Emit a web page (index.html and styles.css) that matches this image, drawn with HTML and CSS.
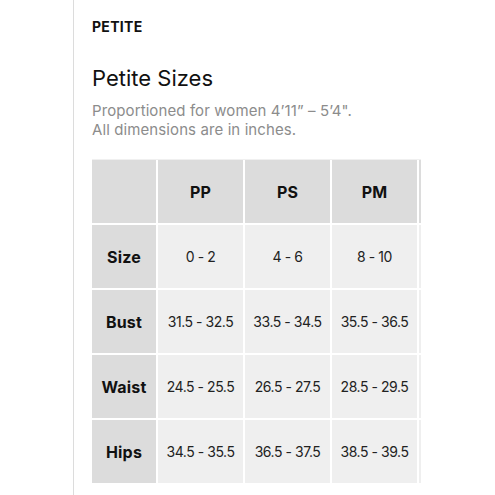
FILE: index.html
```html
<!DOCTYPE html>
<html>
<head>
<meta charset="utf-8">
<link rel="stylesheet" href="styles.css">
</head>
<body>
<div class="page">
  <div class="panel">
    <div class="eyebrow">PETITE</div>
    <h1 class="title">Petite Sizes</h1>
    <p class="desc">Proportioned for women 4’11” – 5’4".<br>All dimensions are in inches.</p>
    <div class="scroller">
      <div class="chart">
        <div class="cell head"></div>
        <div class="cell head">PP</div>
        <div class="cell head">PS</div>
        <div class="cell head">PM</div>
        <div class="cell head"></div>

        <div class="cell head">Size</div>
        <div class="cell">0 - 2</div>
        <div class="cell">4 - 6</div>
        <div class="cell">8 - 10</div>
        <div class="cell"></div>

        <div class="cell head">Bust</div>
        <div class="cell">31.5 - 32.5</div>
        <div class="cell">33.5 - 34.5</div>
        <div class="cell">35.5 - 36.5</div>
        <div class="cell"></div>

        <div class="cell head">Waist</div>
        <div class="cell">24.5 - 25.5</div>
        <div class="cell">26.5 - 27.5</div>
        <div class="cell">28.5 - 29.5</div>
        <div class="cell"></div>

        <div class="cell head">Hips</div>
        <div class="cell">34.5 - 35.5</div>
        <div class="cell">36.5 - 37.5</div>
        <div class="cell">38.5 - 39.5</div>
        <div class="cell"></div>
      </div>
    </div>
  </div>
</div>
</body>
</html>
```
FILE: styles.css
```css
html, body {
  margin: 0;
  padding: 0;
  background: #ffffff;
}
body {
  font-family: Inter, "Open Sans", sans-serif;
  color: #111;
  width: 495px;
  height: 495px;
  overflow: hidden;
}
.page {
  padding-left: 73px;
  height: 495px;
}
.panel {
  border-left: 1px solid #dcdcdc;
  height: 495px;
  padding: 18px 0 0 18px;
  box-sizing: border-box;
}
.eyebrow {
  font-size: 14px;
  font-weight: 700;
  line-height: 17px;
  letter-spacing: 0.3px;
}
.title {
  margin: 30px 0 0 0;
  font-size: 22px;
  font-weight: 400;
  line-height: 26px;
  letter-spacing: 0;
}
.desc {
  margin: 10px 0 0 0;
  font-size: 15px;
  line-height: 19px;
  color: #8c8c8c;
  letter-spacing: 0.1px;
}
.scroller {
  margin-top: 20px;
  width: 329px;
  overflow: hidden;
  border-top: 1px solid #f0f0f0;
}
.chart {
  display: grid;
  grid-template-columns: 64px repeat(3, 85px) 85px;
  grid-auto-rows: 63px;
  gap: 2px;
  width: max-content;
}
.cell {
  background: #efefef;
  display: flex;
  align-items: center;
  justify-content: center;
  font-size: 14px;
  letter-spacing: -0.45px;
  color: #222;
}
.cell.head {
  background: #dcdcdc;
  font-weight: 700;
  font-size: 16px;
  letter-spacing: 0.2px;
  color: #111;
}
```
